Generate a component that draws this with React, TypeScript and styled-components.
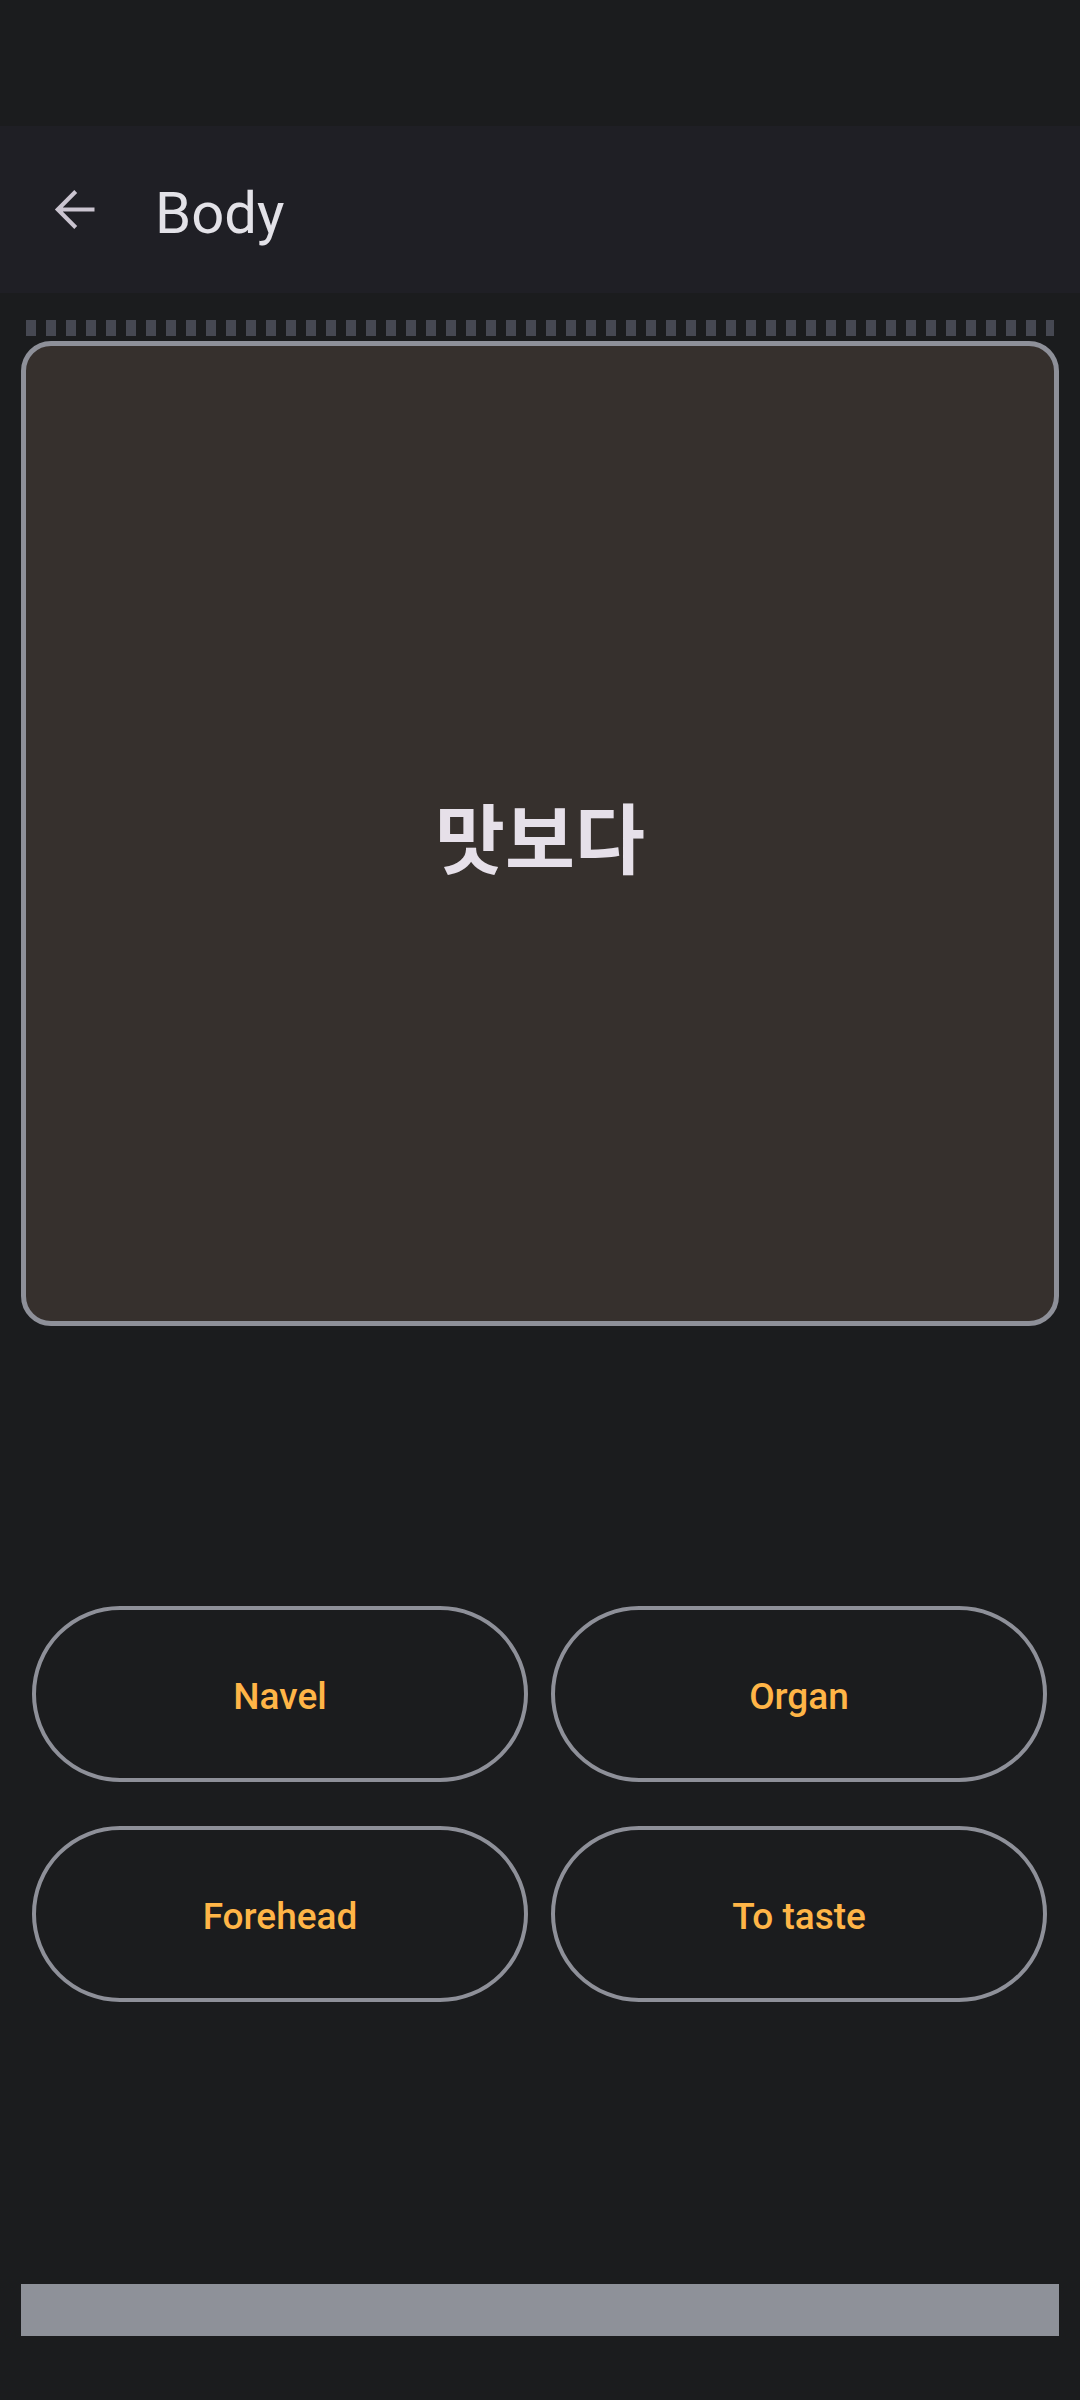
import React from "react";
import styled, { createGlobalStyle } from "styled-components";

const GlobalStyle = createGlobalStyle`
  html, body {
    margin: 0;
    padding: 0;
    background: #1b1c1e;
  }
  body {
    font-family: Roboto, "Noto Sans CJK KR", sans-serif;
  }
`;

const choices = ["Navel", "Organ", "Forehead", "To taste"];

const ArrowBack: React.FC = () => (
  <svg width="63" height="63" viewBox="0 0 24 24" fill="#cac4d0">
    <path d="M20 11.2H7.9l5.5-5.5-1.1-1.1L4.9 12l7.4 7.4 1.1-1.1-5.5-5.5H20z" />
  </svg>
);

const App: React.FC = () => {
  return (
    <Page>
      <GlobalStyle />
      <StatusBar />
      <AppBar>
        <BackButton aria-label="Back">
          <ArrowBack />
        </BackButton>
        <Title>Body</Title>
      </AppBar>
      <Content>
        <Progress />
        <WordCard>
          <Word>맛보다</Word>
        </WordCard>
        <Answers>
          {choices.map((choice) => (
            <Answer key={choice}>{choice}</Answer>
          ))}
        </Answers>
        <BottomBar />
      </Content>
    </Page>
  );
};

export default App;

const Page = styled.div`
  display: flex;
  flex-direction: column;
  width: 1080px;
  height: 2400px;
  background: #1b1c1e;
  overflow: hidden;
`;

const StatusBar = styled.div`
  height: 126px;
  flex-shrink: 0;
`;

const AppBar = styled.header`
  display: flex;
  align-items: center;
  height: 167px;
  flex-shrink: 0;
  background: #1f1f25;
  padding-left: 42px;
  box-sizing: border-box;
`;

const BackButton = styled.div`
  display: flex;
  align-items: center;
  justify-content: center;
  width: 63px;
  height: 63px;
  margin-right: 50px;
`;

const Title = styled.h1`
  margin: 0;
  font-family: Roboto, sans-serif;
  font-size: 58px;
  font-weight: 400;
  color: #e3e2e8;
  line-height: 1;
  padding-top: 6px;
`;

const Content = styled.main`
  display: flex;
  flex-direction: column;
  padding: 27px 21px 0;
`;

const Progress = styled.div`
  height: 16px;
  margin: 0 5px 5px;
  background: repeating-linear-gradient(
    to right,
    #464852 0 10px,
    transparent 10px 20px
  );
`;

const WordCard = styled.section`
  display: flex;
  align-items: center;
  justify-content: center;
  height: 985px;
  box-sizing: border-box;
  border: 5px solid #8e9099;
  border-radius: 30px;
  background: #36302d;
`;

const Word = styled.span`
  font-family: "Noto Sans CJK KR", Roboto, sans-serif;
  font-size: 76px;
  font-weight: 700;
  color: #e6e0e9;
  padding-top: 2px;
`;

const Answers = styled.div`
  display: grid;
  grid-template-columns: 496px 496px;
  column-gap: 23px;
  row-gap: 44px;
  margin-top: 280px;
  padding-left: 11px;
`;

const Answer = styled.button`
  display: flex;
  align-items: center;
  justify-content: center;
  height: 176px;
  box-sizing: border-box;
  border: 4px solid #8e9099;
  border-radius: 88px;
  background: transparent;
  font-family: Roboto, sans-serif;
  font-size: 37px;
  font-weight: 500;
  color: #ffb547;
  padding: 5px 0 0;
`;

const BottomBar = styled.div`
  height: 52px;
  margin-top: 282px;
  background: #8e9199;
`;
